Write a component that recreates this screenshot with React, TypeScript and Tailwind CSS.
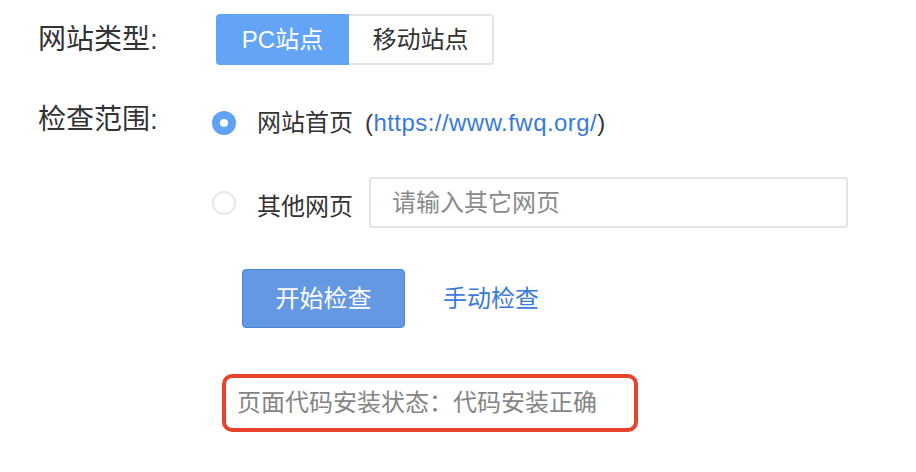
import React from "react";

const font = { fontFamily: '"Liberation Sans", "Noto Sans CJK SC", sans-serif' };

export default function App() {
  return (
    <div className="w-[916px] h-[472px] bg-white text-[#333333] pl-[38px] pt-[14px]" style={font}>
      {/* Row 1 */}
      <div className="flex items-center h-[51px]">
        <div className="w-[178px] text-[28px] leading-none">网站类型:</div>
        <div className="flex h-[51px]">
          <button className="w-[133px] h-full rounded-l-[4px] bg-[#63a4f6] text-white text-[24px] leading-none">
            PC站点
          </button>
          <button className="w-[145px] h-full rounded-r-[4px] border-2 border-l-0 border-[#e3e3e3] bg-white text-[#333333] text-[24px] leading-none">
            移动站点
          </button>
        </div>
      </div>

      {/* Row 2 */}
      <div className="flex mt-[32px]">
        <div className="w-[174px] h-[51px] flex items-center text-[28px] leading-none -mt-[3px]">检查范围:</div>
        <div className="flex flex-col">
          <div className="flex items-center h-[51px]">
            <span className="w-[24px] h-[24px] rounded-full bg-[#5ea1f5] flex items-center justify-center">
              <span className="w-[8px] h-[8px] rounded-full bg-white" />
            </span>
            <span className="ml-[21px] text-[24px] leading-none">网站首页</span>
            <span className="ml-[12px] text-[24px] leading-none tracking-[0.45px]">
              (<span className="text-[#3a7bd8]">https://www.fwq.org/</span>)
            </span>
          </div>
          <div className="flex items-center h-[51px] mt-[29px]">
            <span className="w-[24px] h-[24px] rounded-full border-2 border-[#e8e8e8] bg-white" />
            <span className="ml-[21px] text-[24px] leading-none mt-[8px]">其他网页</span>
            <input
              className="ml-[16px] w-[479px] h-[51px] rounded-[3px] border-2 border-[#e3e3e3] pl-[21px] text-[24px] outline-none placeholder:text-[#8a8a8a]"
              style={font}
              placeholder="请输入其它网页"
            />
          </div>
          <div className="flex items-center mt-[41px] ml-[30px]">
            <button className="w-[163px] h-[59px] rounded-[4px] border border-[#4a86da] bg-[#6498e3] text-white text-[24px] leading-none">
              开始检查
            </button>
            <span className="ml-[38px] text-[24px] leading-none text-[#3b7bd9]">手动检查</span>
          </div>
          <div className="mt-[46px] ml-[10px] w-[416px] h-[58px] rounded-[10px] border-[4px] border-[#e8422b] flex items-center pl-[11px] text-[24px] leading-none text-[#858585]">
            页面代码安装状态：代码安装正确
          </div>
        </div>
      </div>
    </div>
  );
}
